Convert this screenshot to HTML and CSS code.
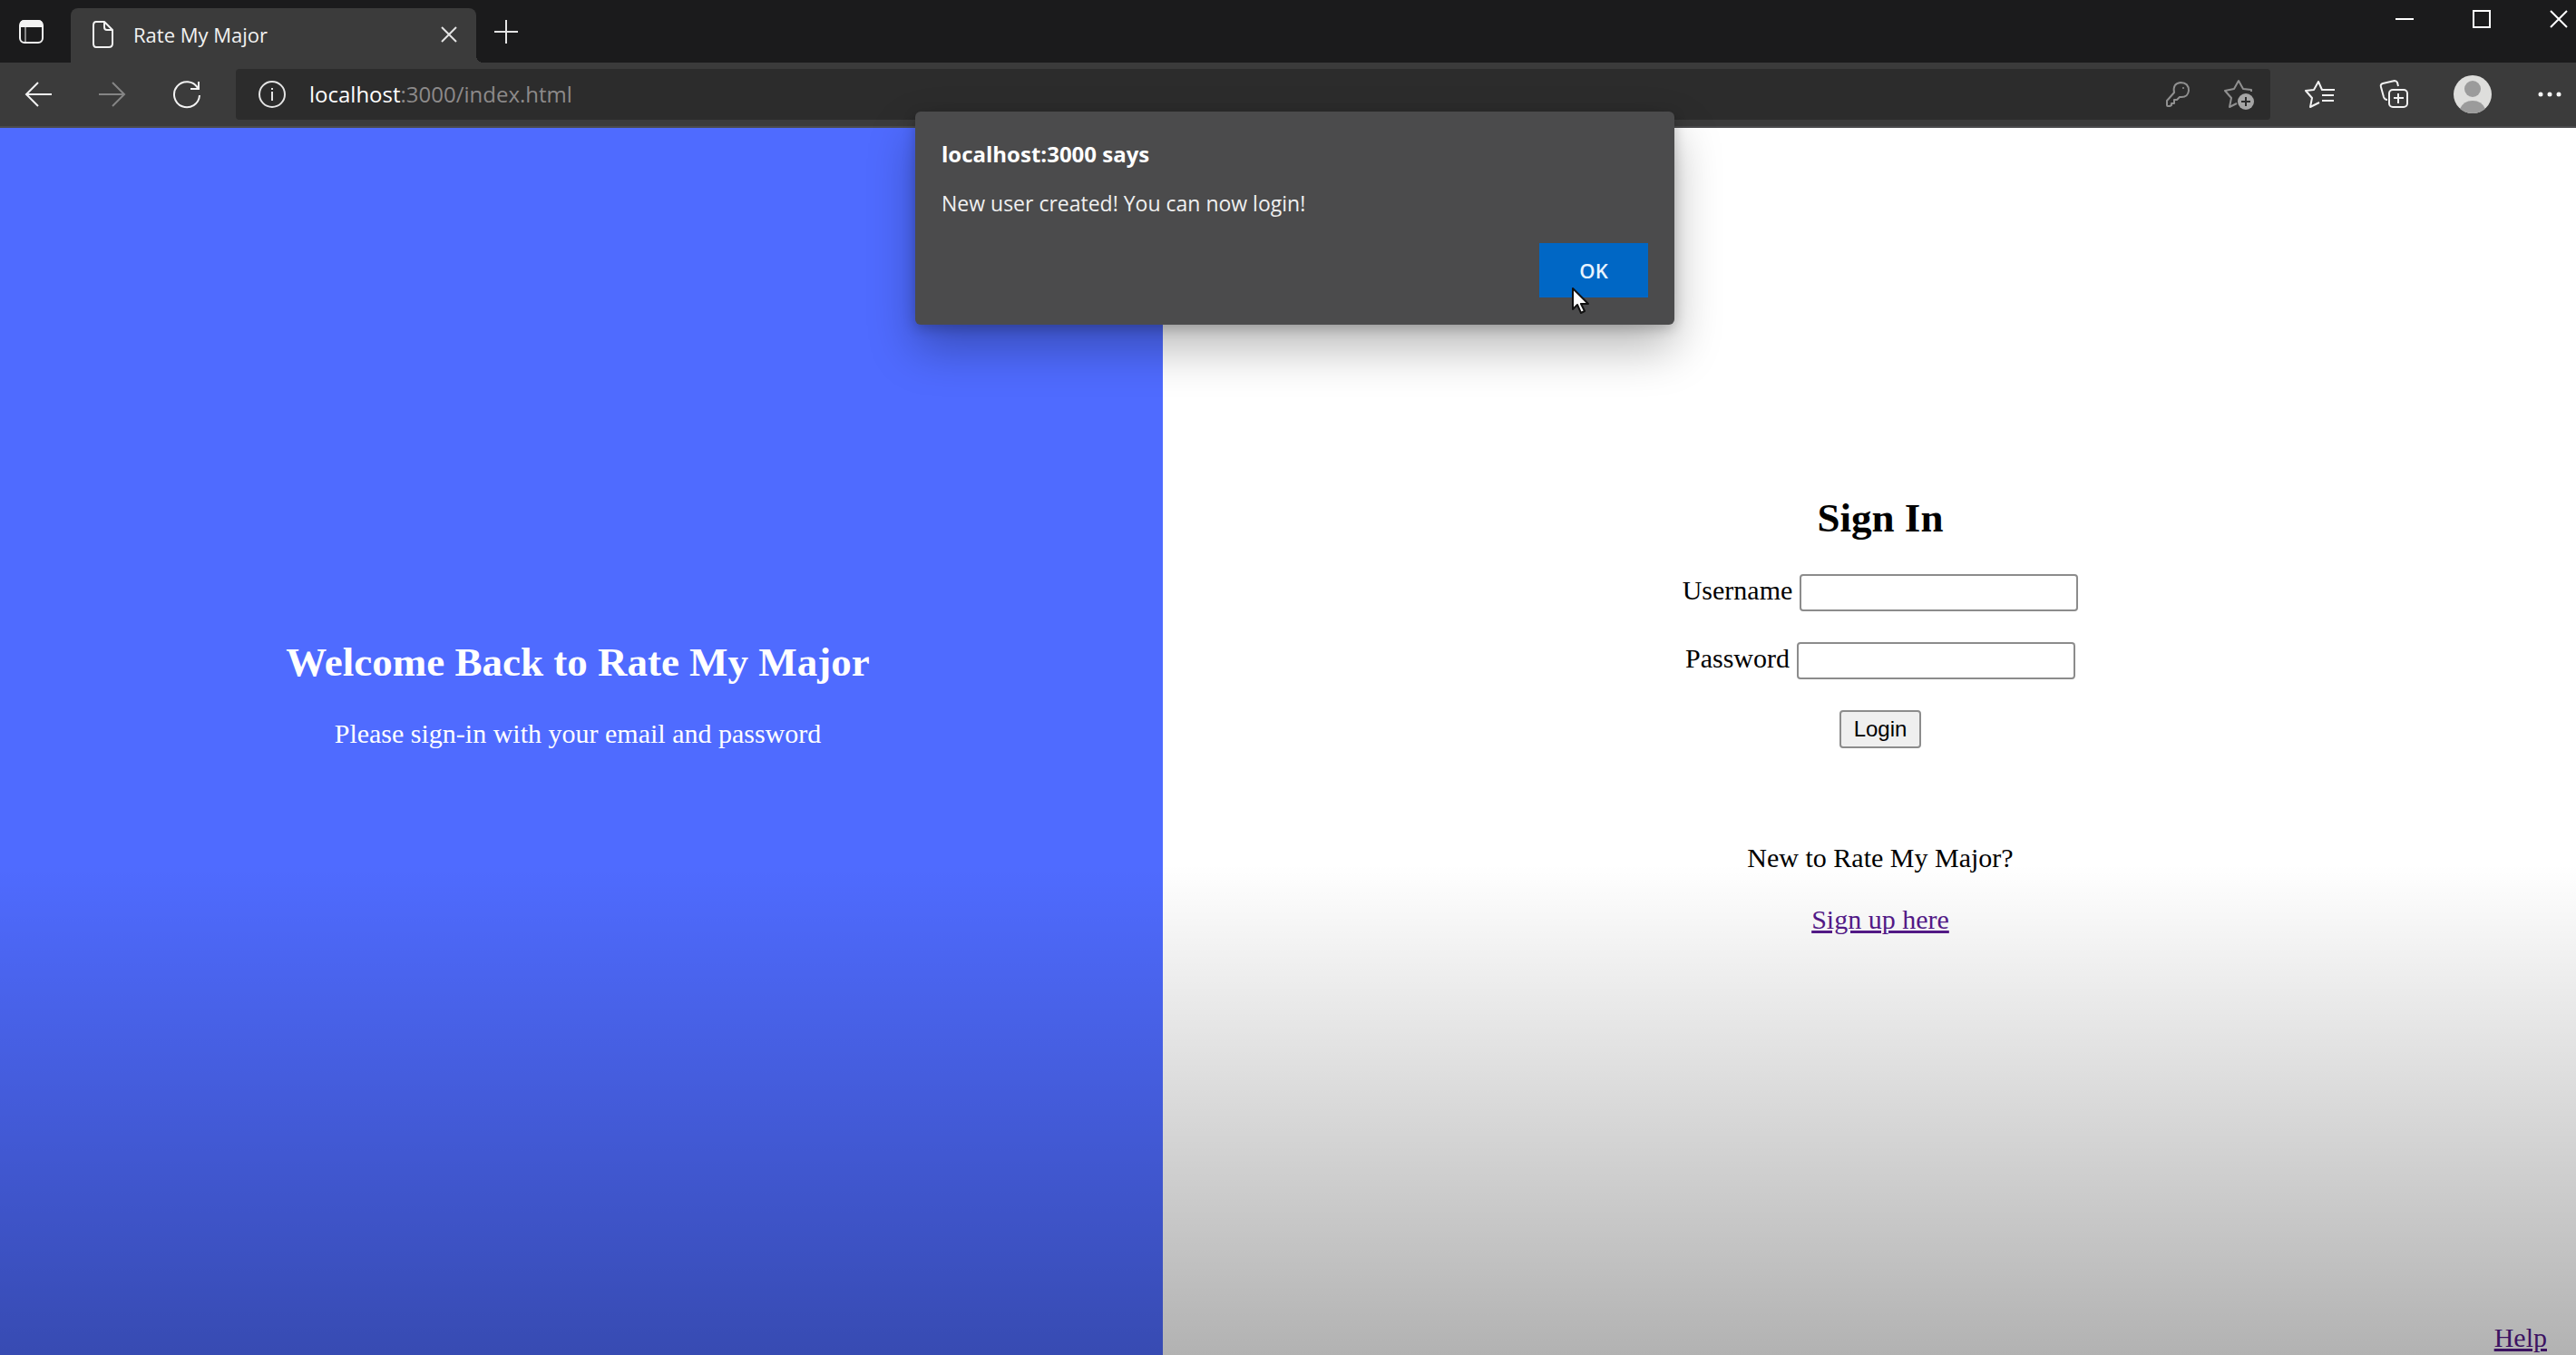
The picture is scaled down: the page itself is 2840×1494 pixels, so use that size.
FILE: index.html
```html
<!DOCTYPE html>
<html lang="en">
<head>
  <meta charset="utf-8">
  <title>Rate My Major</title>
  <link rel="stylesheet" href="styles.css">
</head>
<body>
  <header class="browser">
    <div class="tab-strip">
      <button class="icon-button" aria-label="Tab actions">
        <svg width="32" height="32" viewBox="0 0 32 32" fill="none" stroke="#f2f2f2" stroke-width="2"><rect x="3" y="4" width="25" height="24" rx="5"/><path d="M4 8q0-4 4-4h15q4 0 4 4v2H4z" fill="#f2f2f2"/><path d="M9 11v17" stroke-width="1"/></svg>
      </button>
      <div class="tab">
        <svg width="28" height="32" viewBox="0 0 28 32" fill="none" stroke="#f2f2f2" stroke-width="2" stroke-linejoin="round"><path d="M6 2h9l9 9v15q0 4-4 4H6q-3 0-3-4V6q0-4 3-4zM15 2v6q0 3 3 3h6"/></svg>
        <span class="tab-title">Rate My Major</span>
        <button class="icon-button" aria-label="Close tab">
          <svg width="20" height="20" viewBox="0 0 20 20" stroke="#e4e4e4" stroke-width="2"><path d="M2 2l16 16M18 2L2 18"/></svg>
        </button>
      </div>
      <button class="icon-button new-tab" aria-label="New tab">
        <svg width="26" height="26" viewBox="0 0 26 26" stroke="#e4e4e4" stroke-width="2"><path d="M13 0v26M0 13h26"/></svg>
      </button>
      <div class="window-controls">
        <button class="icon-button" aria-label="Minimize"><svg width="20" height="20" viewBox="0 0 20 20" stroke="#fff" stroke-width="2"><path d="M0 10h20"/></svg></button>
        <button class="icon-button" aria-label="Maximize"><svg width="20" height="20" viewBox="0 0 20 20" fill="none" stroke="#fff" stroke-width="2"><path d="M1 1h18v18H1z"/></svg></button>
        <button class="icon-button" aria-label="Close window"><svg width="20" height="20" viewBox="0 0 20 20" stroke="#fff" stroke-width="2"><path d="M1 1l18 18M19 1L1 19"/></svg></button>
      </div>
    </div>
    <div class="toolbar">
      <nav class="nav-buttons">
        <button class="icon-button" aria-label="Back"><svg width="32" height="32" viewBox="0 0 32 32" fill="none" stroke="#f2f2f2" stroke-width="2"><path d="M31 16H3M16 3L3 16l13 13"/></svg></button>
        <button class="icon-button" aria-label="Forward" disabled><svg width="32" height="32" viewBox="0 0 32 32" fill="none" stroke="#858585" stroke-width="2"><path d="M1 16h28M16 3l13 13-13 13"/></svg></button>
        <button class="icon-button" aria-label="Refresh"><svg width="32" height="32" viewBox="0 0 32 32" fill="none" stroke="#f2f2f2" stroke-width="2"><path d="M28 9A14 14 0 1 0 30 17M29 2v8h-9"/></svg></button>
      </nav>
      <div class="address-bar">
        <svg width="32" height="32" viewBox="0 0 32 32" fill="none" stroke="#e4e4e4" stroke-width="2"><circle cx="16" cy="16" r="14"/><path d="M16 13v10M16 9v2"/></svg>
        <span class="url"><span class="url-host">localhost</span>:3000/index.html</span>
        <button class="icon-button" aria-label="Saved passwords"><svg width="34" height="34" viewBox="0 0 34 34" fill="none" stroke="#909090" stroke-width="2" stroke-linejoin="round"><path d="M13 15q-2-10 7-11 9 0 9 9-1 8-10 7l-3 3h-3v4h-3v2l-2 1H6q-1 0-1-1v-5z"/><circle cx="23" cy="10" r="1" fill="#909090" stroke="none"/></svg></button>
        <button class="icon-button" aria-label="Add to favorites"><svg width="34" height="34" viewBox="0 0 34 34" fill="none" stroke="#909090" stroke-width="2" stroke-linejoin="round"><path d="M30 14V12L21 11 16 2l-5 9-10 2 7 8-2 10 8-4"/><circle cx="24" cy="25" r="9" fill="#a5a5a5" stroke="none"/><path d="M24 20v10M19 25h10" stroke="#2c2c2c"/></svg></button>
      </div>
      <div class="tools">
        <button class="icon-button" aria-label="Favorites"><svg width="42" height="34" viewBox="0 0 42 34" fill="none" stroke="#f2f2f2" stroke-width="2" stroke-linejoin="round"><path d="M26 12h-1l-4-9-5 9-9 1 7 8-2 10 10-5M25 12h14M25 18h13M25 24h13"/></svg></button>
        <button class="icon-button" aria-label="Collections"><svg width="42" height="34" viewBox="0 0 42 34" fill="none" stroke="#f2f2f2" stroke-width="2" stroke-linejoin="round"><path d="M24 8l-1-4q-1-2-3-2L7 5Q4 6 5 9l3 11q1 3 4 3"/><rect x="14" y="12" width="20" height="19" rx="4"/><path d="M24 16v11M19 21h11"/></svg></button>
        <button class="icon-button" aria-label="Profile"><svg width="42" height="42" viewBox="0 0 42 42"><circle cx="21" cy="21" r="21" fill="#dededc"/><circle cx="21" cy="15" r="9" fill="#9b9b9b"/><path d="M7 37q4-9 14-9t14 9q-6 5-14 5T7 37z" fill="#9b9b9b"/></svg></button>
        <button class="icon-button" aria-label="Settings and more"><svg width="42" height="8" viewBox="0 0 42 8" fill="#f5f5f5"><circle cx="11" cy="4" r="2.5"/><circle cx="21" cy="4" r="2.5"/><circle cx="31" cy="4" r="2.5"/></svg></button>
      </div>
    </div>
  </header>

  <main class="page">
    <section class="welcome">
      <h2>Welcome Back to Rate My Major</h2>
      <p>Please sign-in with your email and password</p>
    </section>
    <section class="sign-in">
      <div class="sign-in-body">
        <form class="login-form">
          <h2>Sign In</h2>
          <div class="field"><label for="username">Username</label><input id="username" type="text"></div>
          <div class="field"><label for="password">Password</label><input id="password" type="password"></div>
          <button class="login-button" type="submit">Login</button>
        </form>
        <div class="sign-up">
          <p>New to Rate My Major?</p>
          <a href="signup.html">Sign up here</a>
        </div>
      </div>
      <footer class="help"><a href="help.html">Help</a></footer>
    </section>
  </main>

  <div class="alert" role="alertdialog" aria-labelledby="alert-title" aria-describedby="alert-message">
    <h1 id="alert-title">localhost:3000 says</h1>
    <p id="alert-message">New user created! You can now login!</p>
    <button class="ok-button">OK</button>
    <svg class="cursor" width="20" height="30" viewBox="0 0 20 30"><path d="M1 1v23l5-5 4 9 4-2-4-8h8z" fill="#fff" stroke="#111" stroke-width="2" stroke-linejoin="round"/></svg>
  </div>
</body>
</html>
```

FILE: styles.css
```css
* {
  box-sizing: border-box;
}

body {
  margin: 0;
  min-height: 100vh;
  display: flex;
  flex-direction: column;
  font-family: "Liberation Serif", serif;
  font-size: 30px;
  line-height: 34px;
  color: #000;
}

h1, h2, p {
  margin: 0;
}

h2 {
  font-size: 45px;
  line-height: 52px;
}

a {
  color: #551a8b;
}

svg {
  display: block;
  flex: none;
}

.icon-button {
  padding: 0;
  border: 0;
  background: none;
}

/* Browser window */
.browser {
  font-family: "Open Sans", "Noto Sans", sans-serif;
  background: #3b3b3b;
}

.tab-strip {
  display: flex;
  align-items: center;
  height: 69px;
  padding: 0 9px 0 19px;
  background: #1b1b1c;
}

.tab {
  position: relative;
  display: flex;
  align-items: center;
  gap: 19px;
  width: 447px;
  height: 60px;
  margin-left: 27px;
  padding: 0 20px 2px 22px;
  align-self: flex-end;
  border-radius: 8px 8px 0 0;
  background: #3b3b3b;
}

.tab::after {
  content: "";
  position: absolute;
  left: 100%;
  bottom: 0;
  width: 8px;
  height: 8px;
  background: radial-gradient(circle at 100% 0, transparent 8px, #3b3b3b 8px);
}

.tab-title {
  flex: 1;
  font-size: 22px;
  color: #f2f2f2;
}

.new-tab {
  margin-left: 20px;
}

.window-controls {
  display: flex;
  gap: 65px;
  align-self: flex-start;
  margin-left: auto;
  padding-top: 11px;
}

.toolbar {
  display: flex;
  align-items: center;
  height: 72px;
  padding: 0 8px 0 26px;
  border-bottom: 2px solid #4a4a4c;
}

.nav-buttons {
  display: flex;
  gap: 50px;
}

.address-bar {
  flex: 1;
  display: flex;
  align-items: center;
  height: 56px;
  margin: 0 32px 0 38px;
  padding: 0 17px 0 24px;
  border-radius: 4px;
  background: #2c2c2c;
}

.url {
  flex: 1;
  margin-left: 25px;
  font-size: 24px;
  color: #8c8a8a;
}

.url-host {
  color: #fff;
}

.address-bar .icon-button + .icon-button {
  margin-left: 34px;
}

.tools {
  display: flex;
  align-items: center;
  gap: 43px;
}

/* Sign-in page */
.page {
  position: relative;
  flex: 1;
  display: grid;
  grid-template-columns: 1282fr 1558fr;
}

/* Shade that deepens toward the foot of the page */
.page::after {
  content: "";
  position: absolute;
  inset: 0;
  background: linear-gradient(rgba(0, 0, 0, 0) 60%, rgba(0, 0, 0, 0.3));
  pointer-events: none;
}

.welcome {
  display: flex;
  flex-direction: column;
  align-items: center;
  justify-content: center;
  gap: 36px;
  padding: 0 8px 106px 0;
  color: #fff;
  background: #4f6bff;
}

.sign-in {
  display: flex;
  flex-direction: column;
  background: #fff;
}

.sign-in-body {
  flex: 1;
  display: flex;
  flex-direction: column;
  align-items: center;
  justify-content: center;
  gap: 104px;
  padding: 0 0 24px 24px;
}

.login-form,
.sign-up {
  display: flex;
  flex-direction: column;
  align-items: center;
  gap: 34px;
}

.login-form h2 {
  margin-bottom: 2px;
}

.field {
  display: flex;
  align-items: baseline;
  gap: 8px;
}

.field input {
  width: 307px;
  height: 41px;
  padding: 0 4px;
  border: 2px solid #8c8c8c;
  border-radius: 4px;
  background: #fff;
  font: 24px "Liberation Sans", sans-serif;
}

.login-button {
  height: 42px;
  padding: 0 14px;
  border: 2px solid #8c8c8c;
  border-radius: 4px;
  background: #efefef;
  color: #000;
  font: 24px "Liberation Sans", sans-serif;
}

.help {
  padding: 0 32px 2px 0;
  text-align: right;
}

/* Alert box */
.alert {
  position: absolute;
  top: 123px;
  left: 1009px;
  display: flex;
  flex-direction: column;
  width: 837px;
  padding: 30px 29px;
  border-radius: 6px;
  background: #4b4b4c;
  box-shadow: 0 26px 52px rgba(0, 0, 0, 0.28), 0 4px 14px rgba(0, 0, 0, 0.22);
  font-family: "Open Sans", "Noto Sans", sans-serif;
  color: #fff;
}

.alert h1 {
  font-size: 24px;
  font-weight: 700;
  line-height: 34px;
}

.alert p {
  margin-top: 20px;
  font-size: 23px;
  color: #f0f0f0;
}

.ok-button {
  align-self: flex-end;
  width: 120px;
  height: 60px;
  margin-top: 27px;
  border: 0;
  background: #0067c5;
  color: #e8f4ff;
  font: 600 22px "Open Sans", "Noto Sans", sans-serif;
}

.cursor {
  position: absolute;
  top: 194px;
  left: 724px;
}
```
